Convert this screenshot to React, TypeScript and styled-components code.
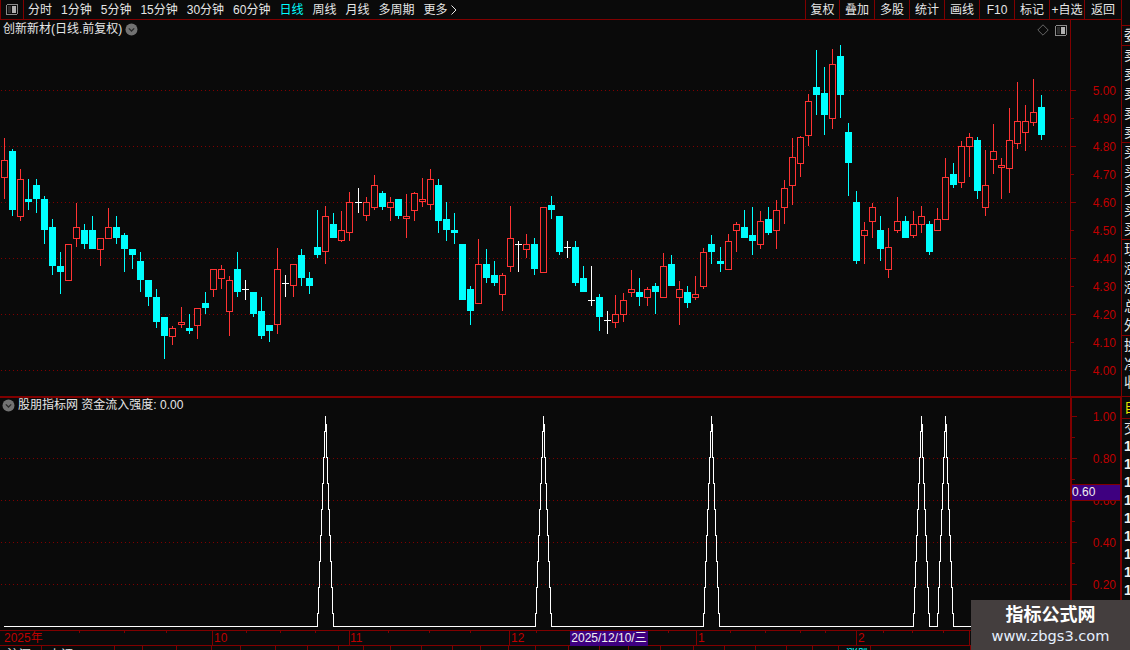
import React from "react";
import styled, { createGlobalStyle } from "styled-components";

const RED_LINE = "#800000";
const BG = "#0a0a0a";
const FONT = `"Liberation Sans", "Noto Sans CJK SC", sans-serif`;

const Global = createGlobalStyle`
  html, body { margin: 0; padding: 0; background: ${BG}; overflow: hidden; }
  body { font-family: ${FONT}; }
`;

const Screen = styled.div`
  position: relative;
  width: 1130px;
  height: 650px;
  display: flex;
  overflow: hidden;
  background: ${BG};
  font-size: 12px;
  color: #e6e6e6;
`;
const Main = styled.div`
  width: 1122px;
  flex: none;
  display: flex;
  flex-direction: column;
`;
const TopBar = styled.div`
  height: 20px;
  box-sizing: border-box;
  flex: none;
  display: flex;
  align-items: stretch;
  border-bottom: 1px solid ${RED_LINE};
  line-height: 18px;
`;
const CornerBox = styled.div`
  width: 24px;
  box-sizing: border-box;
  border-left: 1px solid ${RED_LINE};
  border-right: 1px solid ${RED_LINE};
  display: flex;
  align-items: center;
  justify-content: center;
`;
const Nav = styled.div`
  flex: 1;
  display: flex;
  gap: 9px;
  padding-left: 4px;
`;
const NavItem = styled.span<{ $active?: boolean }>`
  color: ${(p) => (p.$active ? "#00ffff" : "#e6e6e6")};
  white-space: nowrap;
  display: flex;
  align-items: center;
  gap: 3px;
  padding-top: 1px;
`;
const ToolButton = styled.div<{ $w: number }>`
  width: ${(p) => p.$w}px;
  box-sizing: border-box;
  border-left: 1px solid ${RED_LINE};
  text-align: center;
  white-space: nowrap;
  padding-top: 1px;
  &:last-child { border-right: 1px solid ${RED_LINE}; }
`;
const Pane = styled.div<{ $h: number }>`
  position: relative;
  height: ${(p) => p.$h}px;
  flex: none;
  display: flex;
  box-sizing: border-box;
`;
const Plot = styled.svg`
  display: block;
  width: 1070px;
  height: 100%;
  flex: none;
`;
const AxisSvg = styled.svg`
  display: block;
  width: 52px;
  height: 100%;
  flex: none;
  font-family: ${FONT};
  font-size: 12px;
  text { fill: #bf0000; }
`;
const Divider = styled.div`
  height: 2px;
  flex: none;
  background: ${RED_LINE};
`;
const PaneTitle = styled.div<{ $left: number; $top: number }>`
  position: absolute;
  left: ${(p) => p.$left}px;
  top: ${(p) => p.$top}px;
  display: flex;
  align-items: center;
  gap: 3px;
  line-height: 14px;
  white-space: nowrap;
`;
const PaneIcons = styled.div`
  position: absolute;
  top: 4px;
  left: 1037px;
  display: flex;
  gap: 6px;
  align-items: center;
`;
const PriceTag = styled.div`
  position: absolute;
  left: 1071px;
  top: 86px;
  width: 50px;
  height: 17px;
  box-sizing: border-box;
  background: #3e0080;
  border: 1px solid ${RED_LINE};
  color: #f0f0f0;
  line-height: 15px;
`;
const DateAxis = styled.div`
  position: relative;
  height: 16px;
  flex: none;
  box-sizing: border-box;
  border-top: 1px solid ${RED_LINE};
  border-bottom: 1px solid ${RED_LINE};
  color: #bf0000;
  line-height: 15px;
`;
const DateTicks = styled.svg`
  position: absolute;
  left: 0;
  top: 0;
  width: 1122px;
  height: 15px;
`;
const DateLabel = styled.span<{ $x: number }>`
  position: absolute;
  left: ${(p) => p.$x}px;
  top: 0;
`;
const DateCursor = styled.div`
  position: absolute;
  left: 570px;
  top: 0;
  width: 78px;
  height: 15px;
  background: #3e0080;
  color: #f0f0f0;
  text-align: center;
  white-space: nowrap;
`;
const StatusRow = styled.div`
  flex: none;
  height: 4px;
  display: flex;
  overflow: hidden;
`;
const StatusCell = styled.div<{ $w: number; $cyan?: boolean }>`
  width: ${(p) => p.$w}px;
  flex: none;
  box-sizing: border-box;
  border-right: 1px solid ${RED_LINE};
  padding: 2px 0 0 7px;
  line-height: 14px;
  color: ${(p) => (p.$cyan ? "#00ffff" : "#e6e6e6")};
  white-space: nowrap;
  overflow: hidden;
`;
const Sidebar = styled.div`
  width: 8px;
  flex: none;
  overflow: hidden;
  padding-top: 25px;
  box-sizing: border-box;
`;
const SideGroup = styled.div<{ $h: number; $yellow?: boolean }>`
  height: ${(p) => p.$h}px;
  box-sizing: border-box;
  border-top: 1px solid ${RED_LINE};
  color: ${(p) => (p.$yellow ? "#e6e600" : "#e6e6e6")};
  font-size: 14px;
  width: 30px;
  padding-left: 2px;
`;
const SideChar = styled.div<{ $rh: number }>`
  height: ${(p) => p.$rh}px;
  line-height: ${(p) => p.$rh}px;
`;
const SideNum = styled.div`
  height: 18px;
  line-height: 18px;
  width: 30px;
  padding-left: 2px;
  font-size: 14px;
  font-weight: 700;
  color: #f0f0f0;
`;
const Watermark = styled.div`
  position: absolute;
  right: 0;
  bottom: 0;
  width: 159px;
  height: 50px;
  background: #443e3e;
  display: flex;
  flex-direction: column;
  align-items: center;
  padding-top: 5px;
  box-sizing: border-box;
`;
const WmTitle = styled.div`
  font-size: 18px;
  font-weight: 700;
  line-height: 21px;
  color: #fff;
`;
const WmUrl = styled.div`
  font-family: "DejaVu Sans", sans-serif;
  font-size: 14.6px;
  line-height: 20px;
  color: #e6f0ff;
`;

type K = "r" | "c" | "w";
// kind, high, low, body top, body bottom (page pixel rows)
const D: [K, number, number, number, number][] = [
  ["r",138,199,160,178],["c",149,216,151,210],["r",169,221,179,217],["c",179,210,199,202],["c",179,213,185,199],
  ["c",196,244,199,230],["c",219,275,227,266],["c",252,294,266,272],["r",244,281,244,281],["r",203,247,227,239],
  ["c",224,249,230,244],["c",216,249,230,249],["r",238,266,238,250],["r",208,239,227,239],["c",216,244,227,238],
  ["c",233,272,235,249],["c",249,269,249,255],["c",252,292,261,280],["c",280,306,280,297],["c",289,328,297,322],
  ["c",317,359,317,336],["r",326,345,328,337],["r",307,328,322,325],["c",314,334,328,331],["r",308,339,308,326],
  ["c",292,314,303,308],["r",269,297,269,290],["r",265,289,269,279],["r",276,336,280,312],["c",252,297,269,292],
  ["w",280,300,289,289],["c",292,317,292,314],["c",297,339,311,336],["c",325,342,325,331],["r",248,334,269,325],
  ["w",275,297,283,283],["r",264,297,264,286],["c",249,286,255,278],["c",272,294,278,286],["c",210,258,247,255],
  ["r",206,264,216,252],["c",213,238,224,238],["r",211,242,230,241],["r",192,241,202,233],["w",188,213,202,202],
  ["r",197,221,202,216],["r",175,210,185,208],["c",191,210,193,207],["r",197,221,202,208],["c",199,219,199,216],
  ["r",194,238,216,219],["r",192,221,193,211],["r",178,207,199,202],["r",169,210,179,205],["c",179,233,185,221],
  ["c",202,241,219,230],["c",213,244,230,233],["c",244,300,244,300],["c",286,325,289,311],["r",239,304,264,304],
  ["c",249,283,264,278],["c",261,286,275,283],["r",273,311,275,295],["r",206,272,238,267],["w",241,272,244,244],
  ["r",234,258,244,250],["c",238,275,244,269],["r",207,273,207,273],["c",196,219,205,210],["c",216,255,216,252],
  ["w",241,258,247,247],["c",241,286,247,283],["c",266,292,278,292],["w",266,306,300,300],["c",294,331,297,317],
  ["w",311,334,320,320],["r",295,328,314,323],["r",293,322,300,315],["r",270,297,289,293],["c",278,306,292,297],
  ["r",287,306,289,298],["c",283,314,286,292],["r",253,298,266,298],["c",255,286,264,286],["r",281,325,289,298],
  ["c",286,308,292,303],["r",276,300,294,298],["r",248,289,252,287],["c",235,264,244,252],["c",247,272,261,264],
  ["r",234,270,241,270],["r",222,252,224,231],["c",210,238,227,238],["c",207,255,235,241],["r",211,249,221,245],
  ["c",207,235,219,233],["r",200,249,210,231],["r",180,224,188,208],["r",138,205,157,186],["r",136,177,137,164],
  ["r",94,146,101,136],["c",50,115,87,95],["c",67,135,93,115],["r",49,129,64,119],["c",45,118,56,95],
  ["c",123,196,132,163],["c",191,264,202,261],["r",222,264,230,236],["r",203,238,207,222],["c",216,261,230,249],
  ["r",228,278,247,270],["r",197,233,221,231],["c",216,238,221,238],["r",211,238,224,236],["r",206,233,216,225],
  ["c",221,255,224,252],["r",208,231,219,231],["r",158,220,177,220],["c",163,188,174,185],["r",141,188,146,183],
  ["r",133,177,137,147],["c",137,199,140,191],["r",150,216,185,208],["r",124,174,151,160],["r",158,199,165,168],
  ["r",108,193,140,169],["r",82,149,121,144],["r",105,151,121,133],["r",79,126,112,123],["c",95,140,107,135],
];

const JUMPS = [22, 44, 67, 89, 111];
const candleX = (i: number) => 4 + 8 * i + JUMPS.filter((j) => j <= i).length;

const Candles = () => (
  <g shapeRendering="crispEdges">
    {D.map(([k, hi, lo, top, bot], i) => {
      const x = candleX(i);
      const color = k === "r" ? "#ff3333" : k === "c" ? "#00ffff" : "#ffffff";
      return (
        <g key={i}>
          <rect x={x} y={hi} width={1} height={lo - hi} fill={color} />
          {k === "w" ? (
            <rect x={x - 3} y={top} width={7} height={1} fill={color} />
          ) : k === "c" ? (
            <rect x={x - 3} y={top} width={7} height={Math.max(bot - top, 1)} fill={color} />
          ) : (
            <rect x={x - 2.5} y={top + 0.5} width={6} height={Math.max(bot - top - 1, 1)} fill={BG} stroke={color} strokeWidth={1} />
          )}
        </g>
      );
    })}
  </g>
);

const GridLine = ({ y }: { y: number }) => (
  <line x1={1} x2={1068} y1={y + 0.5} y2={y + 0.5} stroke={RED_LINE} strokeWidth={1} strokeDasharray="1 3" shapeRendering="crispEdges" />
);

const UPPER = ["5.00","4.90","4.80","4.70","4.60","4.50","4.40","4.30","4.20","4.10","4.00"];
const upperY = (i: number) => 90 + i * 28;
const LOWER = ["1.00","0.80","0.60","0.40","0.20"];
const lowerY = (i: number) => 416 + i * 42;

// Aliased staircase: one pixel column per step, as the terminal rasterises its line.
const PEAKS = [325, 543, 711, 921, 945];
const BASE = 626.5;
const peakLine = (() => {
  const pts: string[] = [`4,${BASE}`];
  PEAKS.forEach((p) => {
    const rows = [626, 613, 587, 561, 535, 509, 483, 457, 431, 416];
    const left: string[] = [];
    const right: string[] = [];
    for (let d = 8; d >= 0; d--) {
      const lo = rows[8 - d];
      const hi = rows[9 - d];
      left.push(`${p - d + 0.5},${d === 8 ? BASE : lo}`, `${p - d + 0.5},${hi}`);
      if (d > 0) right.unshift(`${p + d + 0.5},${hi}`, `${p + d + 0.5},${d === 8 ? BASE : lo}`);
    }
    pts.push(...left, ...right);
  });
  pts.push(`1068,${BASE}`);
  return pts.join(" ");
})();

const Badge = () => (
  <svg width="13" height="13" viewBox="0 0 13 13">
    <circle cx="6.5" cy="6.5" r="6" fill="#727272" />
    <path d="M3.8 5.4 L6.5 8 L9.2 5.4" fill="none" stroke="#2a2a2a" strokeWidth="1.3" />
  </svg>
);
const PanelIcon = () => (
  <svg width="12" height="11" viewBox="0 0 12 11" shapeRendering="crispEdges">
    <rect x="0.5" y="0.5" width="11" height="10" rx="1.5" fill="none" stroke="#8a8a8a" />
    <rect x="2" y="2" width="3" height="7" fill="#2c2c2c" />
    <rect x="6" y="2" width="4" height="7" fill="#b0b0b0" />
  </svg>
);
const Diamond = () => (
  <svg width="12" height="12" viewBox="0 0 12 12">
    <path d="M6 0.8 L11.2 6 L6 11.2 L0.8 6 Z" fill="none" stroke="#666" />
  </svg>
);

const NAV = ["分时","1分钟","5分钟","15分钟","30分钟","60分钟","日线","周线","月线","多周期"];
const TOOLS: [string, number][] = [["复权",34],["叠加",35],["多股",35],["统计",35],["画线",35],["F10",35],["标记",35],["+自选",35],["返回",38]];

const MINOR_TICKS = [79,124,166,246,280,315,388,429,470,536,603,640,668,730,765,800,825,883,912,943];
const MAJOR_TICKS = [212,349,509,696,856,969];
const STATUS_W = [42,73,28,34,35,29,35,32,31,25,27,31,31,28,28,27,33,31,29,32,33,31,31,31,26,26,32,100];
const CYAN_CELL = 26;

const SIDE_GROUPS: { h: number; rh: number; chars: string[]; yellow?: boolean }[] = [
  { h: 20, rh: 19, chars: ["委"] },
  { h: 97, rh: 19.2, chars: ["卖","卖","卖","卖","卖"] },
  { h: 97, rh: 19.2, chars: ["买","买","买","买","买"] },
  { h: 96, rh: 19, chars: ["现","涨","涨","总","外"] },
  { h: 61, rh: 18.5, chars: ["换","净","收"] },
  { h: 22, rh: 21, chars: ["自"], yellow: true },
  { h: 19, rh: 18, chars: ["交"] },
];

export default function App() {
  return (
    <Screen>
      <Global />
      <Main>
        <TopBar>
          <CornerBox><PanelIcon /></CornerBox>
          <Nav>
            {NAV.map((n) => (
              <NavItem key={n} $active={n === "日线"}>{n}</NavItem>
            ))}
            <NavItem>
              更多
              <svg width="6" height="10" viewBox="0 0 6 10">
                <path d="M0.5 0.5 L5 5 L0.5 9.5" fill="none" stroke="#e6e6e6" />
              </svg>
            </NavItem>
          </Nav>
          {TOOLS.map(([t, w]) => (
            <ToolButton key={t} $w={w}>{t}</ToolButton>
          ))}
        </TopBar>

        <Pane $h={376}>
          <Plot viewBox="0 20 1070 376">
            {[0, 2, 4, 6, 8, 10].map((i) => <GridLine key={i} y={upperY(i)} />)}
            <Candles />
          </Plot>
          <AxisSvg viewBox="1070 20 52 376">
            <rect x="1070" y="20" width="1" height="376" fill={RED_LINE} shapeRendering="crispEdges" />
            <rect x="1121" y="20" width="1" height="376" fill={RED_LINE} shapeRendering="crispEdges" />
            {UPPER.map((t, i) => (
              <g key={t}>
                <rect x="1071" y={upperY(i)} width={i % 2 ? 3 : 5} height="1" fill={RED_LINE} shapeRendering="crispEdges" />
                <text x="1116" y={upperY(i) + 5} textAnchor="end">{t}</text>
              </g>
            ))}
          </AxisSvg>
          <PaneTitle $left={3} $top={2}>创新新材(日线.前复权)<Badge /></PaneTitle>
          <PaneIcons><Diamond /><PanelIcon /></PaneIcons>
        </Pane>
        <Divider />
        <Pane $h={232}>
          <Plot viewBox="0 398 1070 232">
            {[1, 2, 3, 4].map((i) => <GridLine key={i} y={lowerY(i)} />)}
            <polyline points={peakLine} fill="none" stroke="#ffffff" strokeWidth={1} shapeRendering="crispEdges" />
          </Plot>
          <AxisSvg viewBox="1070 398 52 232">
            <rect x="1070" y="398" width="2" height="232" fill={RED_LINE} shapeRendering="crispEdges" />
            <rect x="1120" y="398" width="2" height="232" fill={RED_LINE} shapeRendering="crispEdges" />
            {Array.from({ length: 9 }, (_, i) => (
              <rect key={i} x="1072" y={416 + i * 21} width={i % 2 ? 3 : 5} height="1" fill={RED_LINE} shapeRendering="crispEdges" />
            ))}
            {LOWER.map((t, i) => (
              <text key={t} x="1116" y={lowerY(i) + 5} textAnchor="end">{t}</text>
            ))}
          </AxisSvg>
          <PaneTitle $left={2} $top={0}><Badge /><span>股朋指标网 资金流入强度: 0.00</span></PaneTitle>
          <PriceTag>0.60</PriceTag>
        </Pane>
        <DateAxis>
          <DateTicks viewBox="0 0 1122 15" shapeRendering="crispEdges">
            {MINOR_TICKS.map((x) => <rect key={x} x={x} y={0} width={1} height={2} fill={RED_LINE} />)}
            {MAJOR_TICKS.map((x) => <rect key={x} x={x} y={0} width={1} height={15} fill={RED_LINE} />)}
          </DateTicks>
          <DateLabel $x={4}>2025年</DateLabel>
          <DateLabel $x={214}>10</DateLabel>
          <DateLabel $x={350}>11</DateLabel>
          <DateLabel $x={511}>12</DateLabel>
          <DateLabel $x={698}>1</DateLabel>
          <DateLabel $x={858}>2</DateLabel>
          <DateCursor>2025/12/10/三</DateCursor>
        </DateAxis>
        <StatusRow>
          {STATUS_W.map((w, i) => (
            <StatusCell key={i} $w={w} $cyan={i === CYAN_CELL}>
              {i === 0 ? "沪深" : i === 1 ? "上证" : i === CYAN_CELL ? "涨跌" : ""}
            </StatusCell>
          ))}
        </StatusRow>
      </Main>
      <Sidebar>
        {SIDE_GROUPS.map((g, i) => (
          <SideGroup key={i} $h={g.h} $yellow={g.yellow}>
            {g.chars.map((c, j) => (
              <SideChar key={j} $rh={g.rh}>{c}</SideChar>
            ))}
          </SideGroup>
        ))}
        {Array.from({ length: 11 }, (_, i) => <SideNum key={i}>1</SideNum>)}
      </Sidebar>
      <Watermark>
        <WmTitle>指标公式网</WmTitle>
        <WmUrl>www.zbgs3.com</WmUrl>
      </Watermark>
    </Screen>
  );
}
